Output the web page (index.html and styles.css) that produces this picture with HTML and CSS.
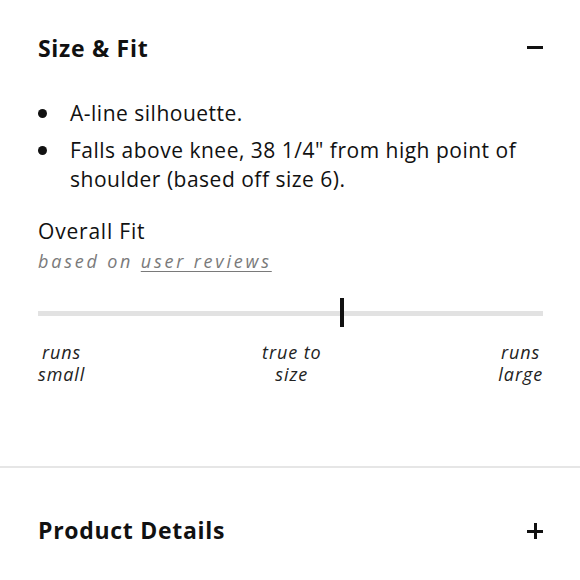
FILE: index.html
```html
<!DOCTYPE html>
<html>
<head>
<meta charset="utf-8">
<link rel="stylesheet" href="styles.css">
</head>
<body>
<section class="panel open">
  <div class="head">
    <h2 class="title">Size &amp; Fit</h2>
    <span class="icon minus"></span>
  </div>
  <ul class="bullets">
    <li>A-line silhouette.</li>
    <li>Falls above knee, 38 1/4" from high point of shoulder (based off size 6).</li>
  </ul>
  <div class="fit">
    <div class="fit-title">Overall Fit</div>
    <div class="fit-sub">based on <span class="link">user reviews</span></div>
    <div class="track"><span class="marker" style="left: 60.2%"></span></div>
    <div class="labels">
      <span class="lbl left">runs<br>small</span>
      <span class="lbl mid">true to<br>size</span>
      <span class="lbl right">runs<br>large</span>
    </div>
  </div>
</section>
<section class="panel closed">
  <div class="head">
    <h2 class="title">Product Details</h2>
    <span class="icon plus"></span>
  </div>
</section>
</body>
</html>
```
FILE: styles.css
```css
html, body { margin: 0; padding: 0; background: #fff; }
body { font-family: "Open Sans", "Lato", sans-serif; color: #111; width: 580px; }
.panel { padding: 0 37px 0 38px; }
.panel.open { border-bottom: 2px solid #e6e6e6; padding-bottom: 81px; }
.head { display: flex; justify-content: space-between; align-items: center; }
.open .head { height: 48px; margin-top: 24px; }
.closed .head { height: 48px; margin-top: 38px; }
.title { margin: 0; font-size: 23px; font-weight: 700; letter-spacing: 0.7px; }
.icon { position: relative; width: 16px; height: 16px; display: block; }
.icon::before { content: ""; position: absolute; left: 0; top: 7px; width: 16px; height: 3px; background: #111; }
.plus::after { content: ""; position: absolute; left: 6.5px; top: 0; width: 3px; height: 16px; background: #111; }
.minus { margin-top: -2px; }
.plus { margin-top: 2px; }
.bullets { list-style: none; margin: 27px 0 0 0; padding: 0; font-size: 21px; line-height: 29px; letter-spacing: 0.5px; }
.bullets li { position: relative; padding-left: 32px; margin-bottom: 8px; }
.bullets li::before { content: ""; position: absolute; left: 0; top: 10px; width: 9px; height: 9px; border-radius: 50%; background: #111; }
.fit { margin-top: 23px; }
.fit-title { font-size: 21px; line-height: 28px; letter-spacing: 0.8px; }
.fit-sub { font-size: 18px; line-height: 28px; margin-top: 2px; font-style: italic; color: #7a7a7a; letter-spacing: 2.8px; }
.link { text-decoration: underline; text-underline-offset: 3px; }
.track { position: relative; height: 5px; background: #e2e2e2; margin-top: 36px; }
.marker { position: absolute; top: -13px; width: 4px; height: 29px; background: #111; margin-left: -2px; }
.labels { display: flex; justify-content: space-between; margin-top: 25px; font-size: 18px; line-height: 22px; font-style: italic; color: #222; letter-spacing: 0.9px; }
.lbl { text-align: center; }
```
